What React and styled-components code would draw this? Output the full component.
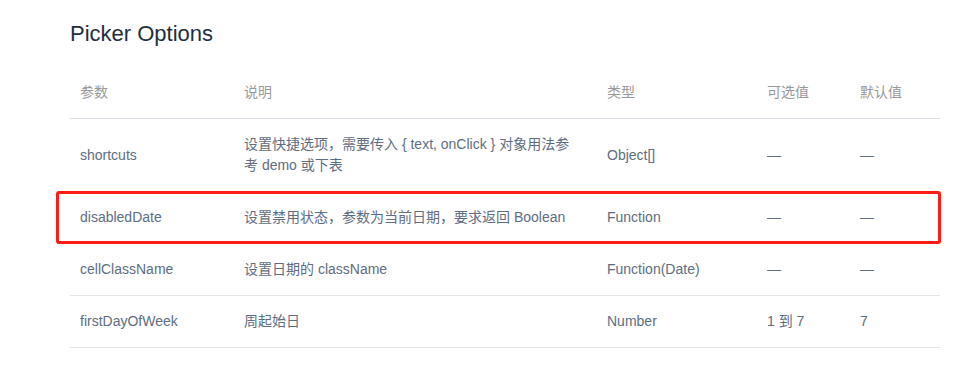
import React from "react";
import styled, { createGlobalStyle } from "styled-components";

const GlobalStyle = createGlobalStyle`
  html, body {
    margin: 0;
    padding: 0;
    background: #ffffff;
  }
  body {
    font-family: "Liberation Sans", Arial, "Noto Sans CJK SC", sans-serif;
    -webkit-font-smoothing: antialiased;
  }
`;

const Page = styled.div`
  padding: 17px 0 0 70px;
  width: 870px;
`;

const Title = styled.h3`
  margin: 0 0 17px;
  font-size: 22px;
  font-weight: 400;
  line-height: 33px;
  color: #1f2f3d;
`;

const Table = styled.div`
  display: flex;
  flex-direction: column;
  font-size: 14px;
  line-height: 21px;
`;

const Row = styled.div`
  position: relative;
  display: grid;
  grid-template-columns: 164px 363px 160px 93px 90px;
  align-items: center;
  border-bottom: 1px solid ${(p) => (p.$head ? "#dcdfe6" : "#e3e5ea")};
  color: ${(p) => (p.$head ? "#999999" : "#5e6d82")};

  ${(p) =>
    p.$marked &&
    `
    &::after {
      content: "";
      position: absolute;
      left: -14px;
      right: -1px;
      top: -1px;
      bottom: -1px;
      border: 3px solid #ff1c14;
      border-radius: 3px;
      pointer-events: none;
    }
  `}
`;

const Cell = styled.div`
  padding: 15px 10px;
`;

const columns = ["参数", "说明", "类型", "可选值", "默认值"];

const rows = [
  {
    name: "shortcuts",
    desc: (
      <>
        设置快捷选项，需要传入 {"{ text, onClick }"} 对象用法参
        <br />
        考 demo 或下表
      </>
    ),
    type: "Object[]",
    accepted: "—",
    def: "—",
  },
  {
    name: "disabledDate",
    desc: "设置禁用状态，参数为当前日期，要求返回 Boolean",
    type: "Function",
    accepted: "—",
    def: "—",
    marked: true,
  },
  {
    name: "cellClassName",
    desc: "设置日期的 className",
    type: "Function(Date)",
    accepted: "—",
    def: "—",
  },
  {
    name: "firstDayOfWeek",
    desc: "周起始日",
    type: "Number",
    accepted: "1 到 7",
    def: "7",
  },
];

export default function App() {
  return (
    <>
      <GlobalStyle />
      <Page>
        <Title>Picker Options</Title>
        <Table>
          <Row $head>
            {columns.map((c) => (
              <Cell key={c}>{c}</Cell>
            ))}
          </Row>
          {rows.map((r) => (
            <Row key={r.name} $marked={r.marked}>
              <Cell>{r.name}</Cell>
              <Cell>{r.desc}</Cell>
              <Cell>{r.type}</Cell>
              <Cell>{r.accepted}</Cell>
              <Cell>{r.def}</Cell>
            </Row>
          ))}
        </Table>
      </Page>
    </>
  );
}
